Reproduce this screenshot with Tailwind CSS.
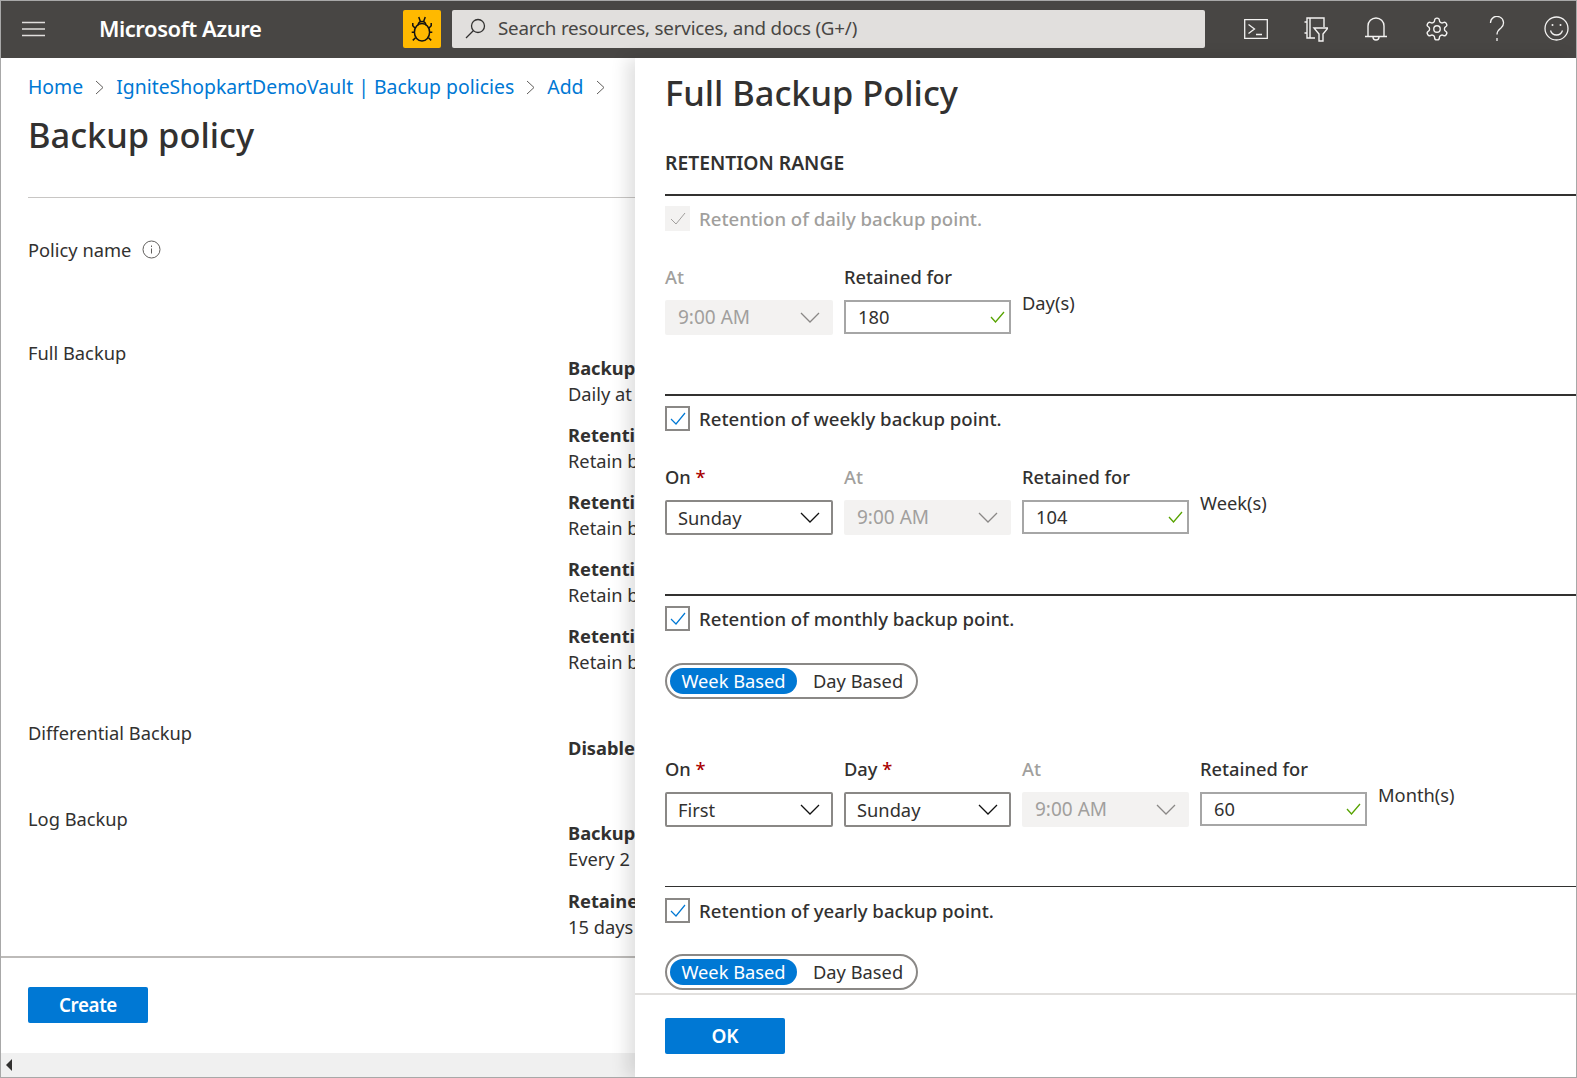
<!DOCTYPE html>
<html lang="en">
<head>
  <meta charset="UTF-8" />
  <title>Backup policy</title>
  <script src="https://cdn.jsdelivr.net/npm/@tailwindcss/browser@4"></script>
</head>
<body class="bg-white">
<div class="w-[1577px] h-[1078px] overflow-hidden flex flex-col border border-[#a8a8a8] font-['Noto_Sans','Open_Sans',sans-serif] text-[#323130] text-[18.3px]">

  <!-- Header -->
  <div class="h-[57px] shrink-0 bg-[#484644] flex items-center pb-[2px] text-white">
    <svg class="ml-[21px] w-[23px] h-[16px]" viewBox="0 0 23 16" fill="none" stroke="#e1dfdd" stroke-width="1.6"><path d="M0 1.5h23M0 8h23M0 14.500h23"/></svg>
    <div class="ml-[54px] w-[304px] text-[22px] font-semibold tracking-[-0.45px]">Microsoft Azure</div>
    <div class="w-[38px] h-[38px] bg-[#ffb900] rounded-[2px] flex items-center justify-center">
      <svg class="w-[22px] h-[26px]" viewBox="0 0 20 24" fill="none" stroke="#111" stroke-width="1.400"><ellipse cx="10" cy="15" rx="7" ry="8"/><path d="M6.500 8.500c0-2 1.500-3.500 3.500-3.500s3.500 1.500 3.500 3.500"/><path d="M7 1l1.500 4M13 1l-1.500 4M3.500 11L1.500 9V6.500M16.500 11l2-2V6.500M3 15H.5M17 15h2.500M4 20l-2.500 2.500M16 20l2.500 2.500"/></svg>
    </div>
    <div class="ml-[11px] w-[753px] h-[38px] bg-[#e1dfdd] rounded-[2px] flex items-center text-[#484644]">
      <svg class="ml-[12px] w-[22px] h-[22px]" viewBox="0 0 22 22" fill="none" stroke="#323130" stroke-width="1.300"><circle cx="14" cy="8" r="6.500"/><path d="M9.500 12.500L2 20"/></svg>
      <span class="ml-[12px] text-[18.8px] tracking-[-0.2px]">Search resources, services, and docs (G+/)</span>
    </div>
    <div class="ml-[39px] flex items-center gap-[36px]">
      <svg class="w-[24px] h-[24px]" viewBox="0 0 24 24" fill="none" stroke="#f3f2f1" stroke-width="1.300"><path d="M.7 2.700h22.600v18.600H.7z"/><path d="M4.500 7.500l6 4.500-6 4.500M12 17.500h6"/></svg>
      <svg class="w-[24px] h-[26px]" viewBox="0 0 24 26" fill="none" stroke="#f3f2f1" stroke-width="1.400"><path d="M20 11V2H3v20h8M6 2v20M.5 6H3M.5 17H3"/><path d="M10 12h14l-5 6v7h-4v-7z"/></svg>
      <svg class="w-[24px] h-[26px]" viewBox="0 0 24 26" fill="none" stroke="#f3f2f1" stroke-width="1.400"><path d="M4 20V10a8 8 0 0 1 16 0v10M1 20.500h22"/><path d="M9 21a3 3 0 0 0 6 0"/></svg>
      <svg class="w-[26px] h-[26px]" viewBox="0 0 24 24" fill="none" stroke="#f3f2f1" stroke-width="1.250"><path d="M12.220 2h-.44a2 2 0 0 0-2 2v.18a2 2 0 0 1-1 1.730l-.43.25a2 2 0 0 1-2 0l-.15-.08a2 2 0 0 0-2.730.73l-.22.38a2 2 0 0 0 .73 2.730l.15.1a2 2 0 0 1 1 1.720v.51a2 2 0 0 1-1 1.740l-.15.09a2 2 0 0 0-.73 2.730l.22.38a2 2 0 0 0 2.730.73l.15-.08a2 2 0 0 1 2 0l.43.25a2 2 0 0 1 1 1.730V20a2 2 0 0 0 2 2h.44a2 2 0 0 0 2-2v-.18a2 2 0 0 1 1-1.730l.43-.25a2 2 0 0 1 2 0l.15.08a2 2 0 0 0 2.730-.73l.22-.39a2 2 0 0 0-.73-2.730l-.15-.08a2 2 0 0 1-1-1.740v-.5a2 2 0 0 1 1-1.740l.15-.09a2 2 0 0 0 .73-2.730l-.22-.38a2 2 0 0 0-2.730-.73l-.15.08a2 2 0 0 1-2 0l-.43-.25a2 2 0 0 1-1-1.730V4a2 2 0 0 0-2-2z"/><circle cx="12" cy="12" r="3"/></svg>
      <svg class="w-[16px] h-[26px] ml-[3px]" viewBox="0 0 16 26" fill="none" stroke="#f3f2f1" stroke-width="1.300"><path d="M1.500 7a6.500 6.500 0 1 1 10.500 5c-2.500 2-4 3-4 6.500M8 22v3"/></svg>
      <svg class="w-[25px] h-[25px] ml-[3px]" viewBox="0 0 25 25" fill="none" stroke="#f3f2f1" stroke-width="1.300"><circle cx="12.500" cy="12.500" r="11.500"/><path d="M6.500 14.500c1 3 3.200 4.500 6 4.500s5-1.500 6-4.500"/><circle cx="8.500" cy="9" r="1" fill="#f3f2f1" stroke="none"/><circle cx="16.500" cy="9" r="1" fill="#f3f2f1" stroke="none"/></svg>
    </div>
  </div>

  <div class="flex-1 flex min-h-0">

    <!-- Backup policy blade -->
    <div class="w-[634px] shrink-0 flex flex-col overflow-hidden">
      <div class="flex-1 min-h-0 pl-[27px]">
        <div class="flex items-center h-[28px] mt-[15px] text-[#0078d4] text-[19.400px] whitespace-nowrap">
          <span>Home</span>
          <svg class="mx-[12px] w-[9px] h-[15px]" viewBox="0 0 9 15" fill="none" stroke="#605e5c"><path d="M1 1l7 6.500L1 14"/></svg>
          <span>IgniteShopkartDemoVault | Backup policies</span>
          <svg class="mx-[12px] w-[9px] h-[15px]" viewBox="0 0 9 15" fill="none" stroke="#605e5c"><path d="M1 1l7 6.500L1 14"/></svg>
          <span>Add</span>
          <svg class="mx-[12px] w-[9px] h-[15px]" viewBox="0 0 9 15" fill="none" stroke="#605e5c"><path d="M1 1l7 6.500L1 14"/></svg>
        </div>
        <h1 class="mt-[11px] text-[34.400px] leading-[46px] font-medium">Backup policy</h1>
        <div class="mt-[39px] h-px bg-[#c8c6c4]"></div>
        <div class="relative grid grid-cols-[540px_1fr] whitespace-nowrap leading-[26px]">
          <div class="h-[142px] pt-[39px] flex items-start gap-[11px] col-span-2">Policy name
            <svg class="mt-[3px] w-[19px] h-[19px]" viewBox="0 0 19 19" fill="none" stroke="#605e5c"><circle cx="9.500" cy="9.500" r="8.500"/><path d="M9.500 8.500v5M9.500 5.500v1.500"/></svg>
          </div>
          <div>Full Backup</div>
          <div class="pt-[15px] h-[380px] overflow-hidden">
            <div class="font-bold">Backup frequency</div><div>Daily at 9:00 AM</div>
            <div class="mt-[15px] font-bold">Retention of daily</div><div>Retain backups</div>
            <div class="mt-[15px] font-bold">Retention of weekly</div><div>Retain backups</div>
            <div class="mt-[15px] font-bold">Retention of monthly</div><div>Retain backups</div>
            <div class="mt-[15px] font-bold">Retention of yearly</div><div>Retain backups</div>
          </div>
          <div>Differential Backup</div>
          <div class="pt-[15px] h-[86px] font-bold">Disabled</div>
          <div>Log Backup</div>
          <div class="pt-[14px]">
            <div class="font-bold">Backup frequency</div><div>Every 2 hours</div>
            <div class="mt-[16px] font-bold">Retained for</div><div>15 days</div>
          </div>
        </div>
      </div>
      <div class="h-[97px] shrink-0 border-t-2 border-[#bdbbb9] pl-[27px] pt-[29px]">
        <button class="w-[120px] h-[36px] bg-[#0078d4] rounded-[2px] text-white text-[18.800px] font-semibold tracking-[-0.4px]">Create</button>
      </div>
      <div class="h-[24px] shrink-0 bg-[#f0f0f0] flex items-center pl-[5px]">
        <div class="w-0 h-0 border-y-[6px] border-y-transparent border-r-[6px] border-r-[#323130]"></div>
      </div>
    </div>

    <!-- Full Backup Policy panel -->
    <div class="flex-1 min-w-0 flex flex-col shadow-[-8px_0_16px_rgba(0,0,0,0.12)] z-10 bg-white">
      <div class="flex-1 min-h-0 overflow-hidden pl-[30px]">
        <h2 class="mt-[12px] text-[34.400px] leading-[46px] font-medium">Full Backup Policy</h2>
        <div class="mt-[33px] h-[27px] leading-[27px] text-[19.300px] font-semibold">RETENTION RANGE</div>
        <div class="mt-[18px] h-[200px] border-t-2 border-[#323130]">
          <div class="mt-[8px] flex items-center gap-[9px] text-[18.600px] text-[#a19f9d] font-medium">
            <div class="w-[25px] h-[25px] bg-[#f3f2f1] flex items-center justify-center"><svg class="w-[16px] h-[13px]" viewBox="0 0 16 13" fill="none" stroke="#a19f9d"><path d="M1 7l5 5L15 1"/></svg></div>
            <span class="mt-[1px]">Retention of daily backup point.</span>
          </div>
          <div class="mt-[31px] flex gap-[11px] items-start">
            <div class="w-[168px]">
              <div class="h-[26px] leading-[26px] text-[#a19f9d] font-medium">At</div>
              <div class="mt-[10px] h-[35px] bg-[#f3f2f1] rounded-[2px] flex items-center justify-between px-[13px] text-[19px] text-[#a19f9d]">9:00 AM
                <svg class="w-[20px] h-[11px]" viewBox="0 0 20 11" fill="none" stroke="#8a8886" stroke-width="1.300"><path d="M1 1l9 9 9-9"/></svg></div>
            </div>
            <div class="w-[167px]">
              <div class="h-[26px] leading-[26px] font-medium">Retained for</div>
              <div class="mt-[10px] h-[34px] border-2 border-[#a6a6a6] flex items-center justify-between pl-[12px] pr-[4px]">180
                <svg class="w-[15px] h-[12px]" viewBox="0 0 15 12" fill="none" stroke="#57a300" stroke-width="1.300"><path d="M1 6l4.500 5L14 1"/></svg></div>
            </div>
            <div class="mt-[26px] leading-[26px]">Day(s)</div>
          </div>
        </div>
        <div class="h-[200px] border-t-2 border-[#323130]">
          <div class="mt-[8px] flex items-center gap-[9px] text-[18.600px] font-medium">
            <div class="w-[25px] h-[25px] border-2 border-[#8a8886] flex items-center justify-center"><svg class="w-[16px] h-[13px]" viewBox="0 0 16 13" fill="none" stroke="#0078d4" stroke-width="1.200"><path d="M1 7l5 5L15 1"/></svg></div>
            <span class="mt-[1px]">Retention of weekly backup point.</span>
          </div>
          <div class="mt-[31px] flex gap-[11px] items-start">
            <div class="w-[168px]">
              <div class="h-[26px] leading-[26px] font-medium">On <span class="text-[#a80000]">*</span></div>
              <div class="mt-[10px] h-[35px] border-2 border-[#8a8886] rounded-[2px] flex items-center justify-between pl-[11px] pr-[11px]">Sunday
                <svg class="w-[20px] h-[11px]" viewBox="0 0 20 11" fill="none" stroke="#111" stroke-width="1.300"><path d="M1 1l9 9 9-9"/></svg></div>
            </div>
            <div class="w-[167px]">
              <div class="h-[26px] leading-[26px] text-[#a19f9d] font-medium">At</div>
              <div class="mt-[10px] h-[35px] bg-[#f3f2f1] rounded-[2px] flex items-center justify-between px-[13px] text-[19px] text-[#a19f9d]">9:00 AM
                <svg class="w-[20px] h-[11px]" viewBox="0 0 20 11" fill="none" stroke="#8a8886" stroke-width="1.300"><path d="M1 1l9 9 9-9"/></svg></div>
            </div>
            <div class="w-[167px]">
              <div class="h-[26px] leading-[26px] font-medium">Retained for</div>
              <div class="mt-[10px] h-[34px] border-2 border-[#a6a6a6] flex items-center justify-between pl-[12px] pr-[4px]">104
                <svg class="w-[15px] h-[12px]" viewBox="0 0 15 12" fill="none" stroke="#57a300" stroke-width="1.300"><path d="M1 6l4.500 5L14 1"/></svg></div>
            </div>
            <div class="mt-[26px] leading-[26px]">Week(s)</div>
          </div>
        </div>
        <div class="h-[292px] border-t-2 border-[#323130]">
          <div class="mt-[8px] flex items-center gap-[9px] text-[18.600px] font-medium">
            <div class="w-[25px] h-[25px] border-2 border-[#8a8886] flex items-center justify-center"><svg class="w-[16px] h-[13px]" viewBox="0 0 16 13" fill="none" stroke="#0078d4" stroke-width="1.200"><path d="M1 7l5 5L15 1"/></svg></div>
            <span class="mt-[1px]">Retention of monthly backup point.</span>
          </div>
          <div class="mt-[30px] w-[253px] h-[36px] border-2 border-[#8a8886] rounded-full flex items-center pl-[3px]">
            <div class="w-[127px] h-[26px] rounded-full bg-[#0078d4] text-white flex items-center justify-center">Week Based</div>
            <div class="ml-[16px]">Day Based</div>
          </div>
          <div class="mt-[57px] flex gap-[11px] items-start">
            <div class="w-[168px]">
              <div class="h-[26px] leading-[26px] font-medium">On <span class="text-[#a80000]">*</span></div>
              <div class="mt-[10px] h-[35px] border-2 border-[#8a8886] rounded-[2px] flex items-center justify-between pl-[11px] pr-[11px]">First
                <svg class="w-[20px] h-[11px]" viewBox="0 0 20 11" fill="none" stroke="#111" stroke-width="1.300"><path d="M1 1l9 9 9-9"/></svg></div>
            </div>
            <div class="w-[167px]">
              <div class="h-[26px] leading-[26px] font-medium">Day <span class="text-[#a80000]">*</span></div>
              <div class="mt-[10px] h-[35px] border-2 border-[#8a8886] rounded-[2px] flex items-center justify-between pl-[11px] pr-[11px]">Sunday
                <svg class="w-[20px] h-[11px]" viewBox="0 0 20 11" fill="none" stroke="#111" stroke-width="1.300"><path d="M1 1l9 9 9-9"/></svg></div>
            </div>
            <div class="w-[167px]">
              <div class="h-[26px] leading-[26px] text-[#a19f9d] font-medium">At</div>
              <div class="mt-[10px] h-[35px] bg-[#f3f2f1] rounded-[2px] flex items-center justify-between px-[13px] text-[19px] text-[#a19f9d]">9:00 AM
                <svg class="w-[20px] h-[11px]" viewBox="0 0 20 11" fill="none" stroke="#8a8886" stroke-width="1.300"><path d="M1 1l9 9 9-9"/></svg></div>
            </div>
            <div class="w-[167px]">
              <div class="h-[26px] leading-[26px] font-medium">Retained for</div>
              <div class="mt-[10px] h-[34px] border-2 border-[#a6a6a6] flex items-center justify-between pl-[12px] pr-[4px]">60
                <svg class="w-[15px] h-[12px]" viewBox="0 0 15 12" fill="none" stroke="#57a300" stroke-width="1.300"><path d="M1 6l4.500 5L14 1"/></svg></div>
            </div>
            <div class="mt-[26px] leading-[26px]">Month(s)</div>
          </div>
        </div>
        <div class="border-t border-[#323130]">
          <div class="mt-[9px] flex items-center gap-[9px] text-[18.600px] font-medium">
            <div class="w-[25px] h-[25px] border-2 border-[#8a8886] flex items-center justify-center"><svg class="w-[16px] h-[13px]" viewBox="0 0 16 13" fill="none" stroke="#0078d4" stroke-width="1.200"><path d="M1 7l5 5L15 1"/></svg></div>
            <span class="mt-[1px]">Retention of yearly backup point.</span>
          </div>
          <div class="mt-[29px] w-[253px] h-[36px] border-2 border-[#8a8886] rounded-full flex items-center pl-[3px]">
            <div class="w-[127px] h-[26px] rounded-full bg-[#0078d4] text-white flex items-center justify-center">Week Based</div>
            <div class="ml-[16px]">Day Based</div>
          </div>
        </div>
      </div>
      <div class="h-[84px] shrink-0 border-t-2 border-[#e1dfdd] pl-[30px] pt-[23px]">
        <button class="w-[120px] h-[36px] bg-[#0078d4] rounded-[2px] text-white text-[19px] font-semibold">OK</button>
      </div>
    </div>
  </div>
</div>
</body>
</html>
